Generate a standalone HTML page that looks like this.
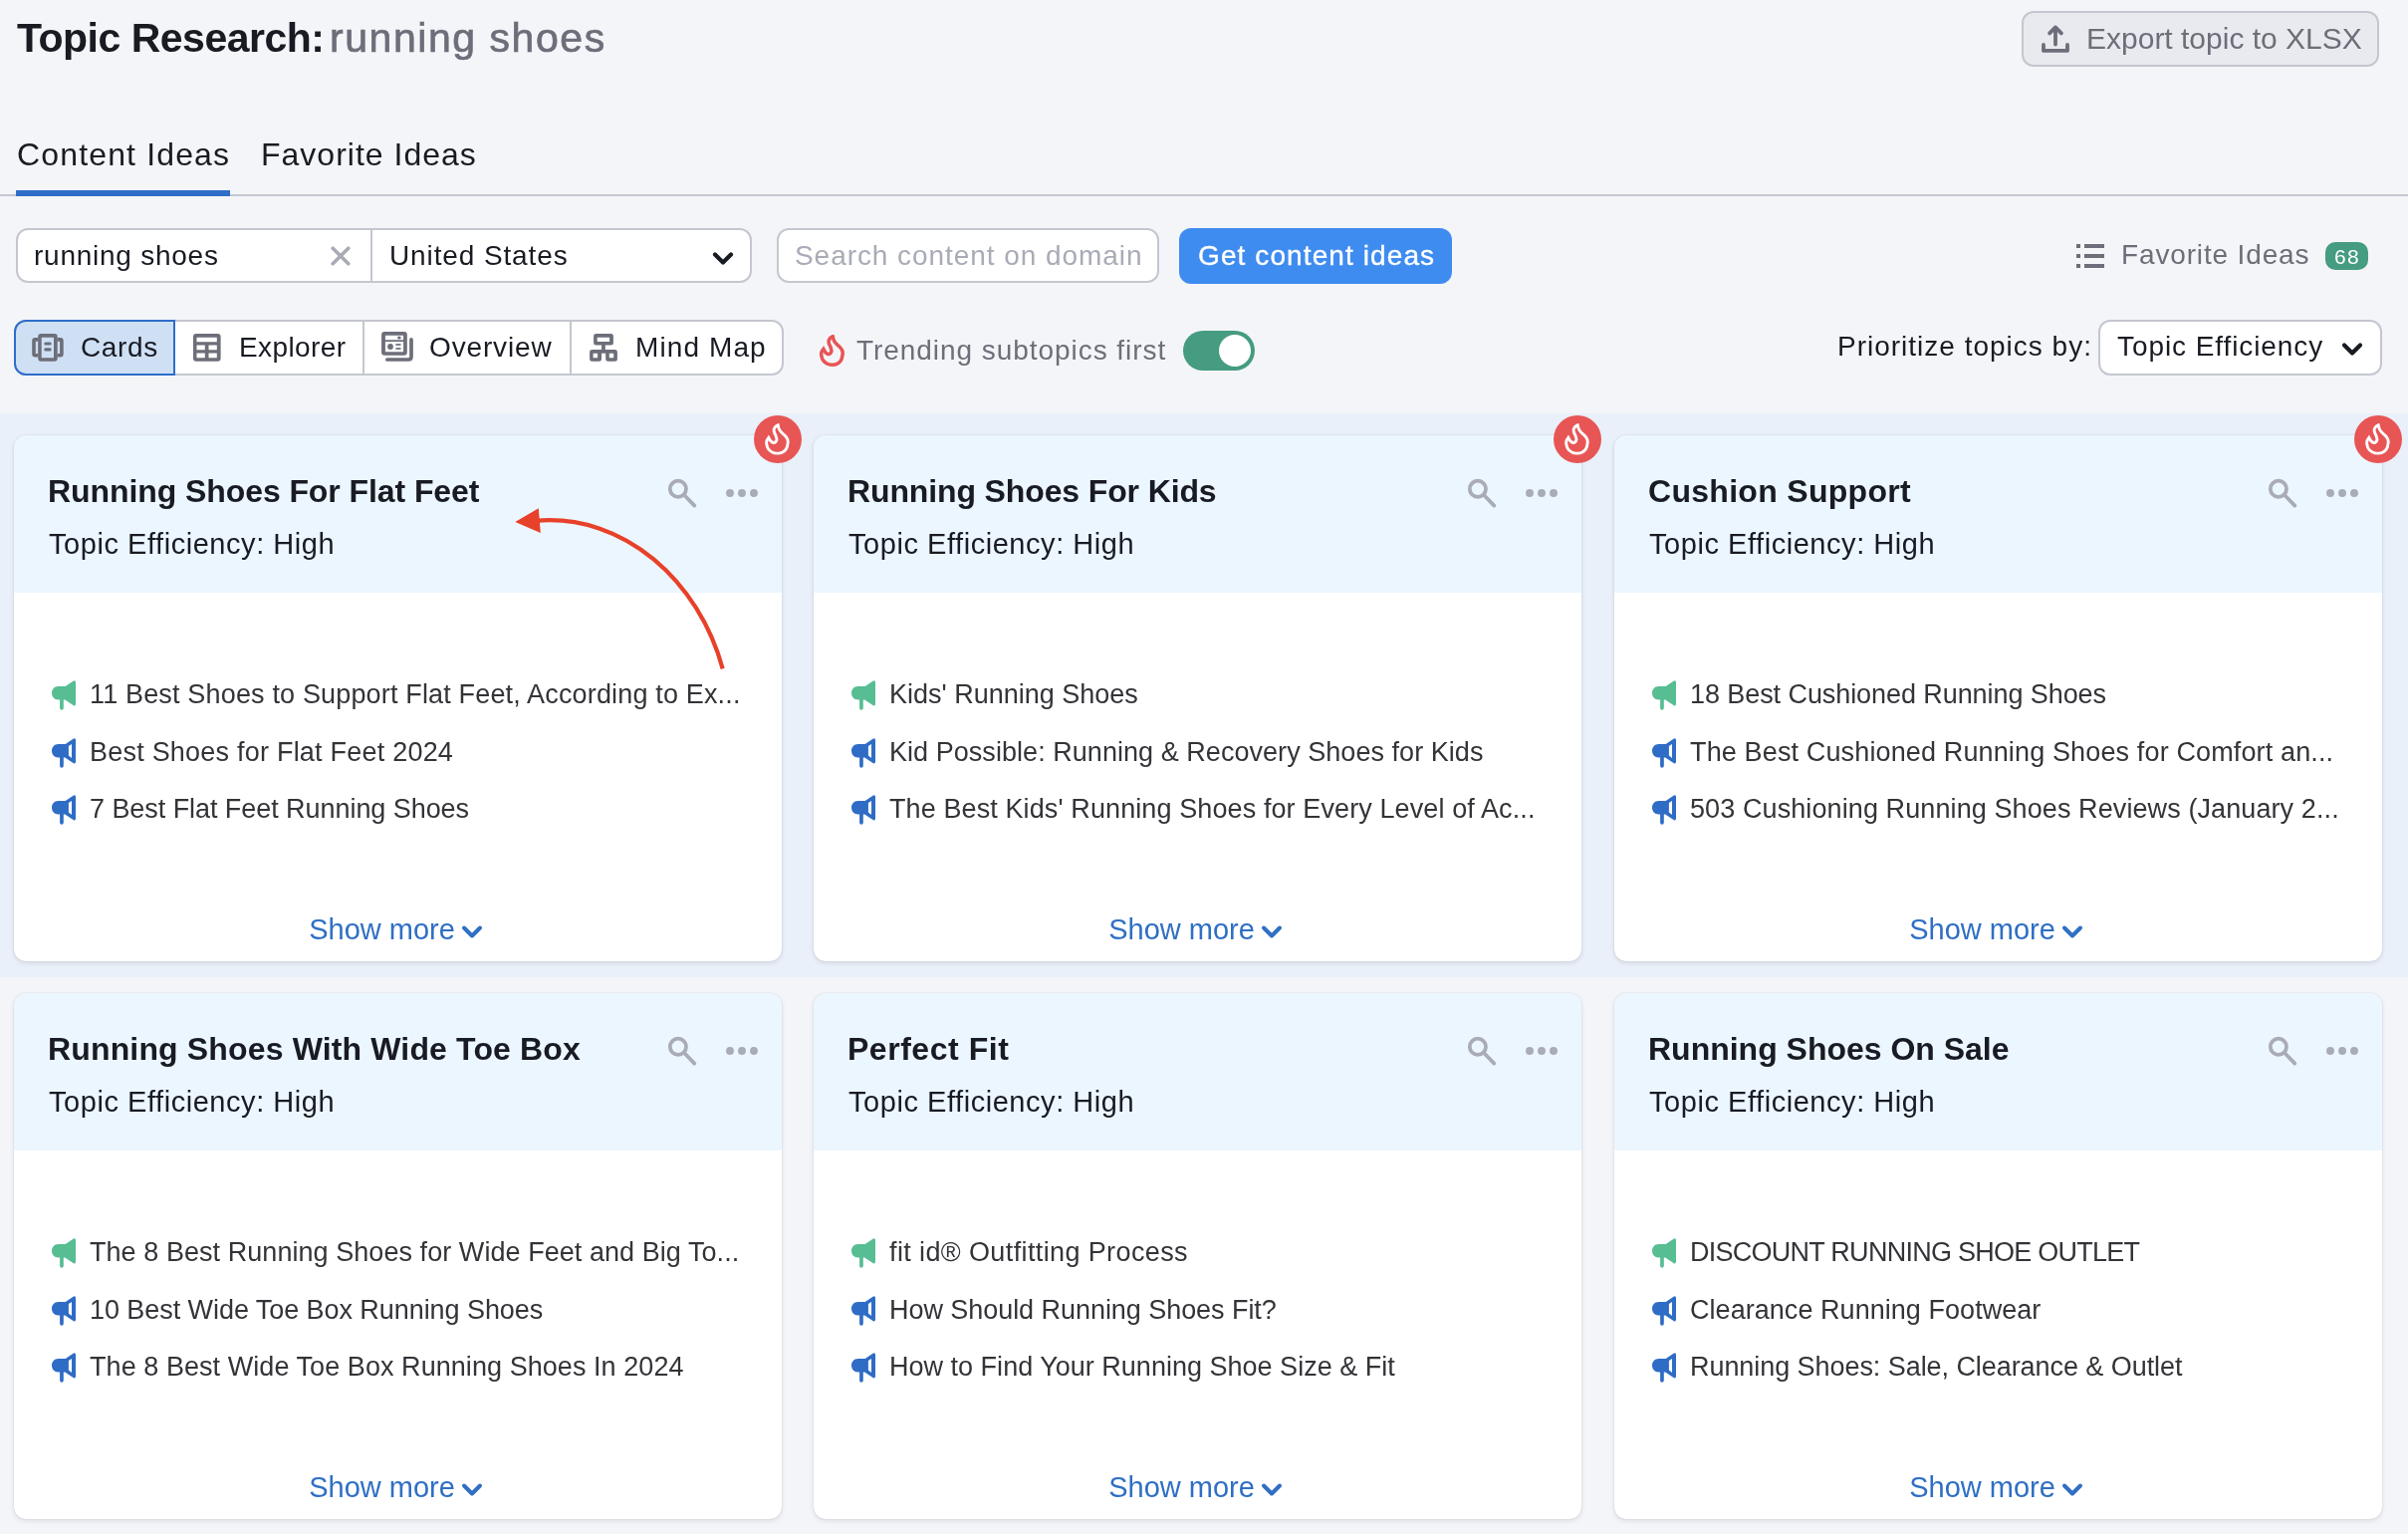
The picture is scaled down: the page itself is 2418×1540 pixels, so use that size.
<!DOCTYPE html>
<html><head><meta charset="utf-8">
<style>
*{box-sizing:border-box;margin:0;padding:0}
html,body{width:2418px;height:1540px;overflow:hidden}
body{background:#f4f5f9;font-family:"Liberation Sans",sans-serif;color:#191b23;position:relative}
.a{position:absolute}
.t{position:absolute;white-space:nowrap;line-height:1;will-change:transform}
.box{position:absolute;background:#fff;border:2px solid #c4c7cf;border-radius:12px}
.card{position:absolute;width:771px;height:528px;background:#fff;border-radius:12px;box-shadow:0 0 1px rgba(25,27,35,0.3),0 2px 5px rgba(25,27,35,0.1)}
.ch{position:absolute;left:0;top:0;width:771px;height:158px;background:#ecf6fe;border-radius:12px 12px 0 0}
.ct{font-size:32px;font-weight:bold;color:#191b23;letter-spacing:-0.09px}
.cs{font-size:29px;color:#191b23;letter-spacing:0.55px}
.ci{font-size:27px;color:#333438;letter-spacing:0.15px}
.sm{will-change:transform;position:absolute;left:-2px;top:482px;width:771px;text-align:center;font-size:29px;color:#2f6fc4;white-space:nowrap;line-height:1}
.badge{position:absolute;left:743px;top:-20px;width:48px;height:48px;border-radius:50%;background:#e85555}
</style></head><body>

<!-- header -->
<div class="t" id="title" style="left:17px;top:18px;font-size:41px;font-weight:bold;color:#191b23;letter-spacing:-0.5px">Topic Research:</div>
<div class="t" id="title2" style="left:331px;top:18px;font-size:41px;color:#6c6e79;letter-spacing:1.55px;-webkit-text-stroke:0.7px #6c6e79">running shoes</div>

<div class="box" style="left:2030px;top:11px;width:359px;height:56px;background:#e9eaef;border-color:#c4c7cf"></div>
<svg class="a" style="left:2049px;top:24px" width="30" height="30" viewBox="0 0 30 30"><path d="M15 3.4V20.5M9.1 9.4L15 3.4L20.9 9.4" stroke="#6c6e79" stroke-width="3.8" fill="none" stroke-linecap="round" stroke-linejoin="round"/><path d="M3 20.9V26.9H27V20.9" stroke="#6c6e79" stroke-width="3.8" fill="none" stroke-linecap="round" stroke-linejoin="round"/></svg>
<div class="t" id="export" style="left:2095px;top:24px;font-size:30px;color:#6c6e79">Export topic to XLSX</div>

<!-- tabs -->
<div class="t" id="tab1" style="left:17px;top:139px;font-size:32px;color:#191b23;letter-spacing:1.15px">Content Ideas</div>
<div class="t" id="tab2" style="left:262px;top:139px;font-size:32px;color:#191b23;letter-spacing:1.0px">Favorite Ideas</div>
<div class="a" style="left:0;top:195px;width:2418px;height:2px;background:#c4c7cf"></div>
<div class="a" style="left:16px;top:191px;width:215px;height:6px;background:#2f6dc9"></div>

<!-- input group -->
<div class="box" style="left:16px;top:229px;width:739px;height:55px"></div>
<div class="a" style="left:372px;top:231px;width:2px;height:51px;background:#c4c7cf"></div>
<div class="t" id="inp" style="left:34px;top:243px;font-size:28px;letter-spacing:0.75px">running shoes</div>
<svg class="a" style="left:330px;top:245px" width="24" height="24" viewBox="0 0 24 24"><path d="M4.2 4.2L19.8 19.8M19.8 4.2L4.2 19.8" stroke="#a9abb6" stroke-width="3.6" stroke-linecap="round"/></svg>
<div class="t" id="us" style="left:391px;top:243px;font-size:28px;letter-spacing:0.88px">United States</div>
<svg class="a" style="left:714px;top:251px" width="24" height="18" viewBox="0 0 24 18"><path d="M4 4.5L12 12.5L20 4.5" stroke="#191b23" stroke-width="4.2" fill="none" stroke-linecap="round" stroke-linejoin="round"/></svg>

<div class="box" style="left:780px;top:229px;width:384px;height:55px"></div>
<div class="t" id="ph" style="left:798px;top:243px;font-size:28px;color:#a9abb6;letter-spacing:0.94px">Search content on domain</div>
<div class="a" style="left:1184px;top:229px;width:274px;height:56px;background:#3f8cf0;border-radius:12px"></div>
<div class="t" id="btn" style="left:1203px;top:243px;font-size:28px;color:#fff;-webkit-text-stroke:0.35px #fff;letter-spacing:1.1px">Get content ideas</div>

<svg class="a" style="left:2083px;top:244px" width="32" height="28" viewBox="0 0 32 28"><path d="M2 1h4v4H2zM10 1h20v4H10zM2 11h4v4H2zM10 11h20v4H10zM2 21h4v4H2zM10 21h20v4H10z" fill="#6c6e79"/></svg>
<div class="t" id="fav" style="left:2130px;top:242px;font-size:28px;color:#6c6e79;letter-spacing:0.85px">Favorite Ideas</div>
<div class="a" style="left:2335px;top:243px;width:43px;height:28px;background:#459c80;border-radius:10px"></div>
<div class="t" id="b68" style="left:2344px;top:246.5px;font-size:21px;color:#fff;letter-spacing:1.2px">68</div>

<!-- view switcher -->
<div class="box" style="left:14px;top:321px;width:773px;height:56px"></div>
<div class="a" style="left:14px;top:321px;width:162px;height:56px;background:#cfe0f5;border:2px solid #2f6dc9;border-radius:12px 0 0 12px"></div>
<div class="a" style="left:364px;top:323px;width:2px;height:52px;background:#c4c7cf"></div>
<div class="a" style="left:572px;top:323px;width:2px;height:52px;background:#c4c7cf"></div>
<div class="t" id="v1" style="left:81px;top:335px;font-size:28px;letter-spacing:0.65px">Cards</div>
<div class="t" id="v2" style="left:240px;top:335px;font-size:28px;letter-spacing:0.4px">Explorer</div>
<div class="t" id="v3" style="left:431px;top:335px;font-size:28px;letter-spacing:0.85px">Overview</div>
<div class="t" id="v4" style="left:638px;top:335px;font-size:28px;letter-spacing:1.1px">Mind Map</div>


<svg class="a" style="left:32px;top:335px" width="32" height="28" viewBox="0 0 32 28"><path fill="#6c6e79" fill-rule="evenodd" d="M9.2 0H22.7Q25.7 0 25.7 3V24.8Q25.7 27.8 22.7 27.8H9.2Q6.2 27.8 6.2 24.8V3Q6.2 0 9.2 0ZM9.7 3.7V24.2H22V3.7Z"/><path fill="#6c6e79" fill-rule="evenodd" d="M3.2 4H6.3V23.6H3.2Q0.2 23.6 0.2 20.6V7Q0.2 4 3.2 4ZM3.8 7.7V20.1H6.3V7.7Z"/><path fill="#6c6e79" fill-rule="evenodd" d="M25.6 4H28.7Q31.7 4 31.7 7V20.6Q31.7 23.6 28.7 23.6H25.6ZM25.6 7.7V20.1H28.1V7.7Z"/><rect x="12.2" y="8.4" width="7.5" height="3.2" rx="1.6" fill="#6c6e79"/><rect x="12.2" y="14.3" width="7.5" height="3.3" rx="1.6" fill="#6c6e79"/></svg>
<svg class="a" style="left:194px;top:335px" width="28" height="28" viewBox="0 0 28 28"><path fill="#6c6e79" fill-rule="evenodd" d="M3 0H24.6Q27.6 0 27.6 3V24.8Q27.6 27.8 24.6 27.8H3Q0 27.8 0 24.8V3Q0 0 3 0ZM3.5 3.7V8.3H23.8V3.7ZM3.5 11.6V16.2H11.8V11.6ZM15.5 11.6V16.2H23.8V11.6ZM3.5 19.6V24.2H11.8V19.6ZM15.5 19.6V24.2H23.8V19.6Z"/></svg>
<svg class="a" style="left:383px;top:333px" width="33" height="31" viewBox="0 0 33 31"><path fill="#6c6e79" fill-rule="evenodd" d="M3.1 0H22.8Q25.8 0 25.8 3V20.8Q25.8 23.8 22.8 23.8H3.1Q0.1 23.8 0.1 20.8V3Q0.1 0 3.1 0ZM3.9 3.7V8.2H22.1V3.7ZM3.9 10V20.2H22.1V10Z"/><ellipse cx="17.9" cy="6" rx="1.8" ry="1.5" fill="#6c6e79"/><circle cx="9" cy="15" r="2.9" fill="#6c6e79"/><rect x="14.4" y="12.1" width="5.1" height="1.7" fill="#6c6e79"/><rect x="14.4" y="16.1" width="5.1" height="1.7" fill="#6c6e79"/><path d="M5.85 28H27Q30 28 30 25V7.95" stroke="#6c6e79" stroke-width="3.7" fill="none" stroke-linecap="round"/></svg>
<svg class="a" style="left:592px;top:335px" width="28" height="28" viewBox="0 0 28 28"><path fill="#6c6e79" fill-rule="evenodd" d="M6.6 0H21.4Q23.9 0 23.9 2.5V9.1Q23.9 11.6 21.4 11.6H6.6Q4.1 11.6 4.1 9.1V2.5Q4.1 0 6.6 0ZM7.7 3.7V8.1H20.1V3.7Z"/><rect x="12.1" y="11" width="3.7" height="6" fill="#6c6e79"/><path fill="#6c6e79" fill-rule="evenodd" d="M2.6 16.1H12V25.3Q12 27.8 9.5 27.8H2.6Q0.1 27.8 0.1 25.3V18.6Q0.1 16.1 2.6 16.1ZM3.6 19.7V24.2H8.1V19.7Z"/><path fill="#6c6e79" fill-rule="evenodd" d="M16.2 16.1H25.4Q27.9 16.1 27.9 18.6V25.3Q27.9 27.8 25.4 27.8H18.7Q16.2 27.8 16.2 25.3ZM19.8 19.7V24.2H24.2V19.7Z"/><rect x="11" y="16.1" width="6" height="3.6" fill="#6c6e79"/></svg>
<svg class="a" style="left:823px;top:336px" width="26" height="33" viewBox="0 0 26 33"><path d="M13.24 1.70C13.41 2.33 13.69 4.28 14.24 5.48C14.79 6.68 15.58 7.82 16.54 8.92C17.50 10.02 18.98 10.98 19.98 12.08C20.98 13.18 22.03 14.28 22.56 15.52C23.09 16.76 23.33 17.82 23.14 19.54C22.95 21.26 22.38 24.22 21.42 25.85C20.46 27.48 18.91 28.58 17.40 29.30C15.89 30.02 14.05 30.20 12.38 30.15C10.71 30.10 8.87 29.77 7.36 29.00C5.85 28.23 4.27 26.95 3.34 25.56C2.41 24.17 1.99 22.08 1.77 20.69C1.55 19.30 1.69 18.29 2.05 17.24C2.41 16.19 3.61 14.86 3.92 14.38C4.25 14.95 5.16 16.96 5.92 17.82C6.68 18.68 7.70 19.40 8.51 19.54C9.32 19.68 10.23 19.21 10.80 18.68C11.37 18.15 11.90 17.38 11.95 16.38C12.00 15.38 11.50 13.85 11.09 12.65C10.68 11.46 9.82 10.36 9.51 9.21C9.20 8.06 9.01 6.77 9.22 5.77C9.44 4.77 10.13 3.87 10.80 3.19C11.47 2.51 12.83 1.95 13.24 1.70Z" stroke="#e85555" stroke-width="3.5" fill="none" stroke-linejoin="miter" stroke-miterlimit="8"/></svg>
<div class="t" id="trend" style="left:860px;top:338px;font-size:28px;color:#6c6e79;letter-spacing:0.95px">Trending subtopics first</div>
<div class="a" style="left:1188px;top:332px;width:72px;height:40px;background:#459c80;border-radius:20px"></div>
<div class="a" style="left:1224px;top:336px;width:32px;height:32px;background:#fff;border-radius:50%"></div>

<div class="t" id="prio" style="left:1845px;top:334px;font-size:28px;color:#191b23;letter-spacing:1.0px">Prioritize topics by:</div>
<div class="box" style="left:2107px;top:321px;width:285px;height:56px"></div>
<div class="t" id="te" style="left:2126px;top:334px;font-size:28px;letter-spacing:0.92px">Topic Efficiency</div>
<svg class="a" style="left:2350px;top:342px" width="24" height="18" viewBox="0 0 24 18"><path d="M4 4.5L12 12.5L20 4.5" stroke="#191b23" stroke-width="4.2" fill="none" stroke-linecap="round" stroke-linejoin="round"/></svg>

<!-- band -->
<div class="a" style="left:0;top:415px;width:2418px;height:566px;background:#e9f0f9"></div>

<div class="card" style="left:14px;top:437px"><div class="ch"></div><div class="t ct" id="c0t" style="left:34px;top:40px;letter-spacing:-0.082px">Running Shoes For Flat Feet</div><div class="t cs" style="left:35px;top:95px">Topic Efficiency:&nbsp;High</div><svg class="a" style="left:652px;top:40px" width="36" height="36" viewBox="0 0 36 36"><circle cx="14.9" cy="13.8" r="8.1" stroke="#a9abb6" stroke-width="3.75" fill="none"/><path d="M20.6 19.5L31.3 30.6" stroke="#a9abb6" stroke-width="3.75" stroke-linecap="round"/></svg><svg class="a" style="left:712px;top:51px" width="38" height="14" viewBox="0 0 38 14"><circle cx="7" cy="7" r="3.95" fill="#a9abb6"/><circle cx="19" cy="7" r="3.95" fill="#a9abb6"/><circle cx="31" cy="7" r="3.95" fill="#a9abb6"/></svg><svg class="a" style="left:38px;top:246.0px" width="24" height="30" viewBox="0 0 24 30"><path d="M13.7 6.1L21.5 0.8Q24 -0.6 24 2.2L24 23.6Q24 26.4 21.5 24.9L13.2 19.6L11.8 19.6L11.8 27.8Q11.8 29.7 9.95 29.7Q8.1 29.7 8.1 27.8L8.1 19.6L6.5 19.6C2.5 19.6 0 16.5 0 12.85C0 9 2.8 6.1 6.5 6.1Z" fill="#57bd93"/></svg><div class="t ci" id="c0i0" style="left:76px;top:247.0px;letter-spacing:0.162px">11 Best Shoes to Support Flat Feet, According to Ex...</div><svg class="a" style="left:38px;top:303.5px" width="24" height="30" viewBox="0 0 24 30"><path d="M13.7 6.1L21.5 0.8Q24 -0.6 24 2.2L24 23.6Q24 26.4 21.5 24.9L13.2 19.6L11.8 19.6L11.8 27.8Q11.8 29.7 9.95 29.7Q8.1 29.7 8.1 27.8L8.1 19.6L6.5 19.6C2.5 19.6 0 16.5 0 12.85C0 9 2.8 6.1 6.5 6.1Z" fill="#2e6cc5"/><path d="M16.9 8.1L20 5.9L20 20.1L16.9 17.5Z" fill="#fff"/></svg><div class="t ci" id="c0i1" style="left:76px;top:304.5px;letter-spacing:0.221px">Best Shoes for Flat Feet 2024</div><svg class="a" style="left:38px;top:361.0px" width="24" height="30" viewBox="0 0 24 30"><path d="M13.7 6.1L21.5 0.8Q24 -0.6 24 2.2L24 23.6Q24 26.4 21.5 24.9L13.2 19.6L11.8 19.6L11.8 27.8Q11.8 29.7 9.95 29.7Q8.1 29.7 8.1 27.8L8.1 19.6L6.5 19.6C2.5 19.6 0 16.5 0 12.85C0 9 2.8 6.1 6.5 6.1Z" fill="#2e6cc5"/><path d="M16.9 8.1L20 5.9L20 20.1L16.9 17.5Z" fill="#fff"/></svg><div class="t ci" id="c0i2" style="left:76px;top:362.0px;letter-spacing:-0.057px">7 Best Flat Feet Running Shoes</div><div class="sm">Show more<svg width="22" height="16" viewBox="0 0 22 16" style="margin-left:6px;vertical-align:0px"><path d="M3 4.5L11 12.5L19 4.5" stroke="#2f6fc4" stroke-width="4" fill="none" stroke-linecap="round" stroke-linejoin="round"/></svg></div><div class="badge"><svg width="26" height="33" viewBox="0 0 26 33" style="position:absolute;left:11px;top:8px"><path d="M13.24 1.70C13.41 2.33 13.69 4.28 14.24 5.48C14.79 6.68 15.58 7.82 16.54 8.92C17.50 10.02 18.98 10.98 19.98 12.08C20.98 13.18 22.03 14.28 22.56 15.52C23.09 16.76 23.33 17.82 23.14 19.54C22.95 21.26 22.38 24.22 21.42 25.85C20.46 27.48 18.91 28.58 17.40 29.30C15.89 30.02 14.05 30.20 12.38 30.15C10.71 30.10 8.87 29.77 7.36 29.00C5.85 28.23 4.27 26.95 3.34 25.56C2.41 24.17 1.99 22.08 1.77 20.69C1.55 19.30 1.69 18.29 2.05 17.24C2.41 16.19 3.61 14.86 3.92 14.38C4.25 14.95 5.16 16.96 5.92 17.82C6.68 18.68 7.70 19.40 8.51 19.54C9.32 19.68 10.23 19.21 10.80 18.68C11.37 18.15 11.90 17.38 11.95 16.38C12.00 15.38 11.50 13.85 11.09 12.65C10.68 11.46 9.82 10.36 9.51 9.21C9.20 8.06 9.01 6.77 9.22 5.77C9.44 4.77 10.13 3.87 10.80 3.19C11.47 2.51 12.83 1.95 13.24 1.70Z" stroke="#fff" stroke-width="2.9" fill="none" stroke-linejoin="miter" stroke-miterlimit="8"/></svg></div></div>
<div class="card" style="left:817px;top:437px"><div class="ch"></div><div class="t ct" id="c1t" style="left:34px;top:40px;letter-spacing:-0.128px">Running Shoes For Kids</div><div class="t cs" style="left:35px;top:95px">Topic Efficiency:&nbsp;High</div><svg class="a" style="left:652px;top:40px" width="36" height="36" viewBox="0 0 36 36"><circle cx="14.9" cy="13.8" r="8.1" stroke="#a9abb6" stroke-width="3.75" fill="none"/><path d="M20.6 19.5L31.3 30.6" stroke="#a9abb6" stroke-width="3.75" stroke-linecap="round"/></svg><svg class="a" style="left:712px;top:51px" width="38" height="14" viewBox="0 0 38 14"><circle cx="7" cy="7" r="3.95" fill="#a9abb6"/><circle cx="19" cy="7" r="3.95" fill="#a9abb6"/><circle cx="31" cy="7" r="3.95" fill="#a9abb6"/></svg><svg class="a" style="left:38px;top:246.0px" width="24" height="30" viewBox="0 0 24 30"><path d="M13.7 6.1L21.5 0.8Q24 -0.6 24 2.2L24 23.6Q24 26.4 21.5 24.9L13.2 19.6L11.8 19.6L11.8 27.8Q11.8 29.7 9.95 29.7Q8.1 29.7 8.1 27.8L8.1 19.6L6.5 19.6C2.5 19.6 0 16.5 0 12.85C0 9 2.8 6.1 6.5 6.1Z" fill="#57bd93"/></svg><div class="t ci" id="c1i0" style="left:76px;top:247.0px;letter-spacing:-0.005px">Kids' Running Shoes</div><svg class="a" style="left:38px;top:303.5px" width="24" height="30" viewBox="0 0 24 30"><path d="M13.7 6.1L21.5 0.8Q24 -0.6 24 2.2L24 23.6Q24 26.4 21.5 24.9L13.2 19.6L11.8 19.6L11.8 27.8Q11.8 29.7 9.95 29.7Q8.1 29.7 8.1 27.8L8.1 19.6L6.5 19.6C2.5 19.6 0 16.5 0 12.85C0 9 2.8 6.1 6.5 6.1Z" fill="#2e6cc5"/><path d="M16.9 8.1L20 5.9L20 20.1L16.9 17.5Z" fill="#fff"/></svg><div class="t ci" id="c1i1" style="left:76px;top:304.5px;letter-spacing:0.046px">Kid Possible: Running &amp; Recovery Shoes for Kids</div><svg class="a" style="left:38px;top:361.0px" width="24" height="30" viewBox="0 0 24 30"><path d="M13.7 6.1L21.5 0.8Q24 -0.6 24 2.2L24 23.6Q24 26.4 21.5 24.9L13.2 19.6L11.8 19.6L11.8 27.8Q11.8 29.7 9.95 29.7Q8.1 29.7 8.1 27.8L8.1 19.6L6.5 19.6C2.5 19.6 0 16.5 0 12.85C0 9 2.8 6.1 6.5 6.1Z" fill="#2e6cc5"/><path d="M16.9 8.1L20 5.9L20 20.1L16.9 17.5Z" fill="#fff"/></svg><div class="t ci" id="c1i2" style="left:76px;top:362.0px;letter-spacing:0.104px">The Best Kids' Running Shoes for Every Level of Ac...</div><div class="sm">Show more<svg width="22" height="16" viewBox="0 0 22 16" style="margin-left:6px;vertical-align:0px"><path d="M3 4.5L11 12.5L19 4.5" stroke="#2f6fc4" stroke-width="4" fill="none" stroke-linecap="round" stroke-linejoin="round"/></svg></div><div class="badge"><svg width="26" height="33" viewBox="0 0 26 33" style="position:absolute;left:11px;top:8px"><path d="M13.24 1.70C13.41 2.33 13.69 4.28 14.24 5.48C14.79 6.68 15.58 7.82 16.54 8.92C17.50 10.02 18.98 10.98 19.98 12.08C20.98 13.18 22.03 14.28 22.56 15.52C23.09 16.76 23.33 17.82 23.14 19.54C22.95 21.26 22.38 24.22 21.42 25.85C20.46 27.48 18.91 28.58 17.40 29.30C15.89 30.02 14.05 30.20 12.38 30.15C10.71 30.10 8.87 29.77 7.36 29.00C5.85 28.23 4.27 26.95 3.34 25.56C2.41 24.17 1.99 22.08 1.77 20.69C1.55 19.30 1.69 18.29 2.05 17.24C2.41 16.19 3.61 14.86 3.92 14.38C4.25 14.95 5.16 16.96 5.92 17.82C6.68 18.68 7.70 19.40 8.51 19.54C9.32 19.68 10.23 19.21 10.80 18.68C11.37 18.15 11.90 17.38 11.95 16.38C12.00 15.38 11.50 13.85 11.09 12.65C10.68 11.46 9.82 10.36 9.51 9.21C9.20 8.06 9.01 6.77 9.22 5.77C9.44 4.77 10.13 3.87 10.80 3.19C11.47 2.51 12.83 1.95 13.24 1.70Z" stroke="#fff" stroke-width="2.9" fill="none" stroke-linejoin="miter" stroke-miterlimit="8"/></svg></div></div>
<div class="card" style="left:1621px;top:437px"><div class="ch"></div><div class="t ct" id="c2t" style="left:34px;top:40px;letter-spacing:0.296px">Cushion Support</div><div class="t cs" style="left:35px;top:95px">Topic Efficiency:&nbsp;High</div><svg class="a" style="left:652px;top:40px" width="36" height="36" viewBox="0 0 36 36"><circle cx="14.9" cy="13.8" r="8.1" stroke="#a9abb6" stroke-width="3.75" fill="none"/><path d="M20.6 19.5L31.3 30.6" stroke="#a9abb6" stroke-width="3.75" stroke-linecap="round"/></svg><svg class="a" style="left:712px;top:51px" width="38" height="14" viewBox="0 0 38 14"><circle cx="7" cy="7" r="3.95" fill="#a9abb6"/><circle cx="19" cy="7" r="3.95" fill="#a9abb6"/><circle cx="31" cy="7" r="3.95" fill="#a9abb6"/></svg><svg class="a" style="left:38px;top:246.0px" width="24" height="30" viewBox="0 0 24 30"><path d="M13.7 6.1L21.5 0.8Q24 -0.6 24 2.2L24 23.6Q24 26.4 21.5 24.9L13.2 19.6L11.8 19.6L11.8 27.8Q11.8 29.7 9.95 29.7Q8.1 29.7 8.1 27.8L8.1 19.6L6.5 19.6C2.5 19.6 0 16.5 0 12.85C0 9 2.8 6.1 6.5 6.1Z" fill="#57bd93"/></svg><div class="t ci" id="c2i0" style="left:76px;top:247.0px;letter-spacing:-0.076px">18 Best Cushioned Running Shoes</div><svg class="a" style="left:38px;top:303.5px" width="24" height="30" viewBox="0 0 24 30"><path d="M13.7 6.1L21.5 0.8Q24 -0.6 24 2.2L24 23.6Q24 26.4 21.5 24.9L13.2 19.6L11.8 19.6L11.8 27.8Q11.8 29.7 9.95 29.7Q8.1 29.7 8.1 27.8L8.1 19.6L6.5 19.6C2.5 19.6 0 16.5 0 12.85C0 9 2.8 6.1 6.5 6.1Z" fill="#2e6cc5"/><path d="M16.9 8.1L20 5.9L20 20.1L16.9 17.5Z" fill="#fff"/></svg><div class="t ci" id="c2i1" style="left:76px;top:304.5px;letter-spacing:0.138px">The Best Cushioned Running Shoes for Comfort an...</div><svg class="a" style="left:38px;top:361.0px" width="24" height="30" viewBox="0 0 24 30"><path d="M13.7 6.1L21.5 0.8Q24 -0.6 24 2.2L24 23.6Q24 26.4 21.5 24.9L13.2 19.6L11.8 19.6L11.8 27.8Q11.8 29.7 9.95 29.7Q8.1 29.7 8.1 27.8L8.1 19.6L6.5 19.6C2.5 19.6 0 16.5 0 12.85C0 9 2.8 6.1 6.5 6.1Z" fill="#2e6cc5"/><path d="M16.9 8.1L20 5.9L20 20.1L16.9 17.5Z" fill="#fff"/></svg><div class="t ci" id="c2i2" style="left:76px;top:362.0px;letter-spacing:0.097px">503 Cushioning Running Shoes Reviews (January 2...</div><div class="sm">Show more<svg width="22" height="16" viewBox="0 0 22 16" style="margin-left:6px;vertical-align:0px"><path d="M3 4.5L11 12.5L19 4.5" stroke="#2f6fc4" stroke-width="4" fill="none" stroke-linecap="round" stroke-linejoin="round"/></svg></div><div class="badge"><svg width="26" height="33" viewBox="0 0 26 33" style="position:absolute;left:11px;top:8px"><path d="M13.24 1.70C13.41 2.33 13.69 4.28 14.24 5.48C14.79 6.68 15.58 7.82 16.54 8.92C17.50 10.02 18.98 10.98 19.98 12.08C20.98 13.18 22.03 14.28 22.56 15.52C23.09 16.76 23.33 17.82 23.14 19.54C22.95 21.26 22.38 24.22 21.42 25.85C20.46 27.48 18.91 28.58 17.40 29.30C15.89 30.02 14.05 30.20 12.38 30.15C10.71 30.10 8.87 29.77 7.36 29.00C5.85 28.23 4.27 26.95 3.34 25.56C2.41 24.17 1.99 22.08 1.77 20.69C1.55 19.30 1.69 18.29 2.05 17.24C2.41 16.19 3.61 14.86 3.92 14.38C4.25 14.95 5.16 16.96 5.92 17.82C6.68 18.68 7.70 19.40 8.51 19.54C9.32 19.68 10.23 19.21 10.80 18.68C11.37 18.15 11.90 17.38 11.95 16.38C12.00 15.38 11.50 13.85 11.09 12.65C10.68 11.46 9.82 10.36 9.51 9.21C9.20 8.06 9.01 6.77 9.22 5.77C9.44 4.77 10.13 3.87 10.80 3.19C11.47 2.51 12.83 1.95 13.24 1.70Z" stroke="#fff" stroke-width="2.9" fill="none" stroke-linejoin="miter" stroke-miterlimit="8"/></svg></div></div>
<div class="card" style="left:14px;top:997px"><div class="ch"></div><div class="t ct" id="c3t" style="left:34px;top:40px;letter-spacing:0.15px">Running Shoes With Wide Toe Box</div><div class="t cs" style="left:35px;top:95px">Topic Efficiency:&nbsp;High</div><svg class="a" style="left:652px;top:40px" width="36" height="36" viewBox="0 0 36 36"><circle cx="14.9" cy="13.8" r="8.1" stroke="#a9abb6" stroke-width="3.75" fill="none"/><path d="M20.6 19.5L31.3 30.6" stroke="#a9abb6" stroke-width="3.75" stroke-linecap="round"/></svg><svg class="a" style="left:712px;top:51px" width="38" height="14" viewBox="0 0 38 14"><circle cx="7" cy="7" r="3.95" fill="#a9abb6"/><circle cx="19" cy="7" r="3.95" fill="#a9abb6"/><circle cx="31" cy="7" r="3.95" fill="#a9abb6"/></svg><svg class="a" style="left:38px;top:246.0px" width="24" height="30" viewBox="0 0 24 30"><path d="M13.7 6.1L21.5 0.8Q24 -0.6 24 2.2L24 23.6Q24 26.4 21.5 24.9L13.2 19.6L11.8 19.6L11.8 27.8Q11.8 29.7 9.95 29.7Q8.1 29.7 8.1 27.8L8.1 19.6L6.5 19.6C2.5 19.6 0 16.5 0 12.85C0 9 2.8 6.1 6.5 6.1Z" fill="#57bd93"/></svg><div class="t ci" id="c3i0" style="left:76px;top:247.0px;letter-spacing:0.056px">The 8 Best Running Shoes for Wide Feet and Big To...</div><svg class="a" style="left:38px;top:303.5px" width="24" height="30" viewBox="0 0 24 30"><path d="M13.7 6.1L21.5 0.8Q24 -0.6 24 2.2L24 23.6Q24 26.4 21.5 24.9L13.2 19.6L11.8 19.6L11.8 27.8Q11.8 29.7 9.95 29.7Q8.1 29.7 8.1 27.8L8.1 19.6L6.5 19.6C2.5 19.6 0 16.5 0 12.85C0 9 2.8 6.1 6.5 6.1Z" fill="#2e6cc5"/><path d="M16.9 8.1L20 5.9L20 20.1L16.9 17.5Z" fill="#fff"/></svg><div class="t ci" id="c3i1" style="left:76px;top:304.5px;letter-spacing:-0.062px">10 Best Wide Toe Box Running Shoes</div><svg class="a" style="left:38px;top:361.0px" width="24" height="30" viewBox="0 0 24 30"><path d="M13.7 6.1L21.5 0.8Q24 -0.6 24 2.2L24 23.6Q24 26.4 21.5 24.9L13.2 19.6L11.8 19.6L11.8 27.8Q11.8 29.7 9.95 29.7Q8.1 29.7 8.1 27.8L8.1 19.6L6.5 19.6C2.5 19.6 0 16.5 0 12.85C0 9 2.8 6.1 6.5 6.1Z" fill="#2e6cc5"/><path d="M16.9 8.1L20 5.9L20 20.1L16.9 17.5Z" fill="#fff"/></svg><div class="t ci" id="c3i2" style="left:76px;top:362.0px;letter-spacing:0.059px">The 8 Best Wide Toe Box Running Shoes In 2024</div><div class="sm">Show more<svg width="22" height="16" viewBox="0 0 22 16" style="margin-left:6px;vertical-align:0px"><path d="M3 4.5L11 12.5L19 4.5" stroke="#2f6fc4" stroke-width="4" fill="none" stroke-linecap="round" stroke-linejoin="round"/></svg></div></div>
<div class="card" style="left:817px;top:997px"><div class="ch"></div><div class="t ct" id="c4t" style="left:34px;top:40px;letter-spacing:0.53px">Perfect Fit</div><div class="t cs" style="left:35px;top:95px">Topic Efficiency:&nbsp;High</div><svg class="a" style="left:652px;top:40px" width="36" height="36" viewBox="0 0 36 36"><circle cx="14.9" cy="13.8" r="8.1" stroke="#a9abb6" stroke-width="3.75" fill="none"/><path d="M20.6 19.5L31.3 30.6" stroke="#a9abb6" stroke-width="3.75" stroke-linecap="round"/></svg><svg class="a" style="left:712px;top:51px" width="38" height="14" viewBox="0 0 38 14"><circle cx="7" cy="7" r="3.95" fill="#a9abb6"/><circle cx="19" cy="7" r="3.95" fill="#a9abb6"/><circle cx="31" cy="7" r="3.95" fill="#a9abb6"/></svg><svg class="a" style="left:38px;top:246.0px" width="24" height="30" viewBox="0 0 24 30"><path d="M13.7 6.1L21.5 0.8Q24 -0.6 24 2.2L24 23.6Q24 26.4 21.5 24.9L13.2 19.6L11.8 19.6L11.8 27.8Q11.8 29.7 9.95 29.7Q8.1 29.7 8.1 27.8L8.1 19.6L6.5 19.6C2.5 19.6 0 16.5 0 12.85C0 9 2.8 6.1 6.5 6.1Z" fill="#57bd93"/></svg><div class="t ci" id="c4i0" style="left:76px;top:247.0px;letter-spacing:0.382px">fit id® Outfitting Process</div><svg class="a" style="left:38px;top:303.5px" width="24" height="30" viewBox="0 0 24 30"><path d="M13.7 6.1L21.5 0.8Q24 -0.6 24 2.2L24 23.6Q24 26.4 21.5 24.9L13.2 19.6L11.8 19.6L11.8 27.8Q11.8 29.7 9.95 29.7Q8.1 29.7 8.1 27.8L8.1 19.6L6.5 19.6C2.5 19.6 0 16.5 0 12.85C0 9 2.8 6.1 6.5 6.1Z" fill="#2e6cc5"/><path d="M16.9 8.1L20 5.9L20 20.1L16.9 17.5Z" fill="#fff"/></svg><div class="t ci" id="c4i1" style="left:76px;top:304.5px;letter-spacing:-0.05px">How Should Running Shoes Fit?</div><svg class="a" style="left:38px;top:361.0px" width="24" height="30" viewBox="0 0 24 30"><path d="M13.7 6.1L21.5 0.8Q24 -0.6 24 2.2L24 23.6Q24 26.4 21.5 24.9L13.2 19.6L11.8 19.6L11.8 27.8Q11.8 29.7 9.95 29.7Q8.1 29.7 8.1 27.8L8.1 19.6L6.5 19.6C2.5 19.6 0 16.5 0 12.85C0 9 2.8 6.1 6.5 6.1Z" fill="#2e6cc5"/><path d="M16.9 8.1L20 5.9L20 20.1L16.9 17.5Z" fill="#fff"/></svg><div class="t ci" id="c4i2" style="left:76px;top:362.0px;letter-spacing:0.012px">How to Find Your Running Shoe Size &amp; Fit</div><div class="sm">Show more<svg width="22" height="16" viewBox="0 0 22 16" style="margin-left:6px;vertical-align:0px"><path d="M3 4.5L11 12.5L19 4.5" stroke="#2f6fc4" stroke-width="4" fill="none" stroke-linecap="round" stroke-linejoin="round"/></svg></div></div>
<div class="card" style="left:1621px;top:997px"><div class="ch"></div><div class="t ct" id="c5t" style="left:34px;top:40px;letter-spacing:-0.01px">Running Shoes On Sale</div><div class="t cs" style="left:35px;top:95px">Topic Efficiency:&nbsp;High</div><svg class="a" style="left:652px;top:40px" width="36" height="36" viewBox="0 0 36 36"><circle cx="14.9" cy="13.8" r="8.1" stroke="#a9abb6" stroke-width="3.75" fill="none"/><path d="M20.6 19.5L31.3 30.6" stroke="#a9abb6" stroke-width="3.75" stroke-linecap="round"/></svg><svg class="a" style="left:712px;top:51px" width="38" height="14" viewBox="0 0 38 14"><circle cx="7" cy="7" r="3.95" fill="#a9abb6"/><circle cx="19" cy="7" r="3.95" fill="#a9abb6"/><circle cx="31" cy="7" r="3.95" fill="#a9abb6"/></svg><svg class="a" style="left:38px;top:246.0px" width="24" height="30" viewBox="0 0 24 30"><path d="M13.7 6.1L21.5 0.8Q24 -0.6 24 2.2L24 23.6Q24 26.4 21.5 24.9L13.2 19.6L11.8 19.6L11.8 27.8Q11.8 29.7 9.95 29.7Q8.1 29.7 8.1 27.8L8.1 19.6L6.5 19.6C2.5 19.6 0 16.5 0 12.85C0 9 2.8 6.1 6.5 6.1Z" fill="#57bd93"/></svg><div class="t ci" id="c5i0" style="left:76px;top:247.0px;letter-spacing:-0.739px">DISCOUNT RUNNING SHOE OUTLET</div><svg class="a" style="left:38px;top:303.5px" width="24" height="30" viewBox="0 0 24 30"><path d="M13.7 6.1L21.5 0.8Q24 -0.6 24 2.2L24 23.6Q24 26.4 21.5 24.9L13.2 19.6L11.8 19.6L11.8 27.8Q11.8 29.7 9.95 29.7Q8.1 29.7 8.1 27.8L8.1 19.6L6.5 19.6C2.5 19.6 0 16.5 0 12.85C0 9 2.8 6.1 6.5 6.1Z" fill="#2e6cc5"/><path d="M16.9 8.1L20 5.9L20 20.1L16.9 17.5Z" fill="#fff"/></svg><div class="t ci" id="c5i1" style="left:76px;top:304.5px;letter-spacing:0.046px">Clearance Running Footwear</div><svg class="a" style="left:38px;top:361.0px" width="24" height="30" viewBox="0 0 24 30"><path d="M13.7 6.1L21.5 0.8Q24 -0.6 24 2.2L24 23.6Q24 26.4 21.5 24.9L13.2 19.6L11.8 19.6L11.8 27.8Q11.8 29.7 9.95 29.7Q8.1 29.7 8.1 27.8L8.1 19.6L6.5 19.6C2.5 19.6 0 16.5 0 12.85C0 9 2.8 6.1 6.5 6.1Z" fill="#2e6cc5"/><path d="M16.9 8.1L20 5.9L20 20.1L16.9 17.5Z" fill="#fff"/></svg><div class="t ci" id="c5i2" style="left:76px;top:362.0px;letter-spacing:-0.061px">Running Shoes: Sale, Clearance &amp; Outlet</div><div class="sm">Show more<svg width="22" height="16" viewBox="0 0 22 16" style="margin-left:6px;vertical-align:0px"><path d="M3 4.5L11 12.5L19 4.5" stroke="#2f6fc4" stroke-width="4" fill="none" stroke-linecap="round" stroke-linejoin="round"/></svg></div></div>
<svg class="a" style="left:0;top:0" width="800" height="700" viewBox="0 0 800 700"><path d="M538 522.8C627 515 702 584 725.7 671.4" stroke="#e8412a" stroke-width="4.2" fill="none"/><path d="M517.3 524L540.8 510.3L542.8 534.9Z" fill="#e8412a"/></svg>
</body></html>
